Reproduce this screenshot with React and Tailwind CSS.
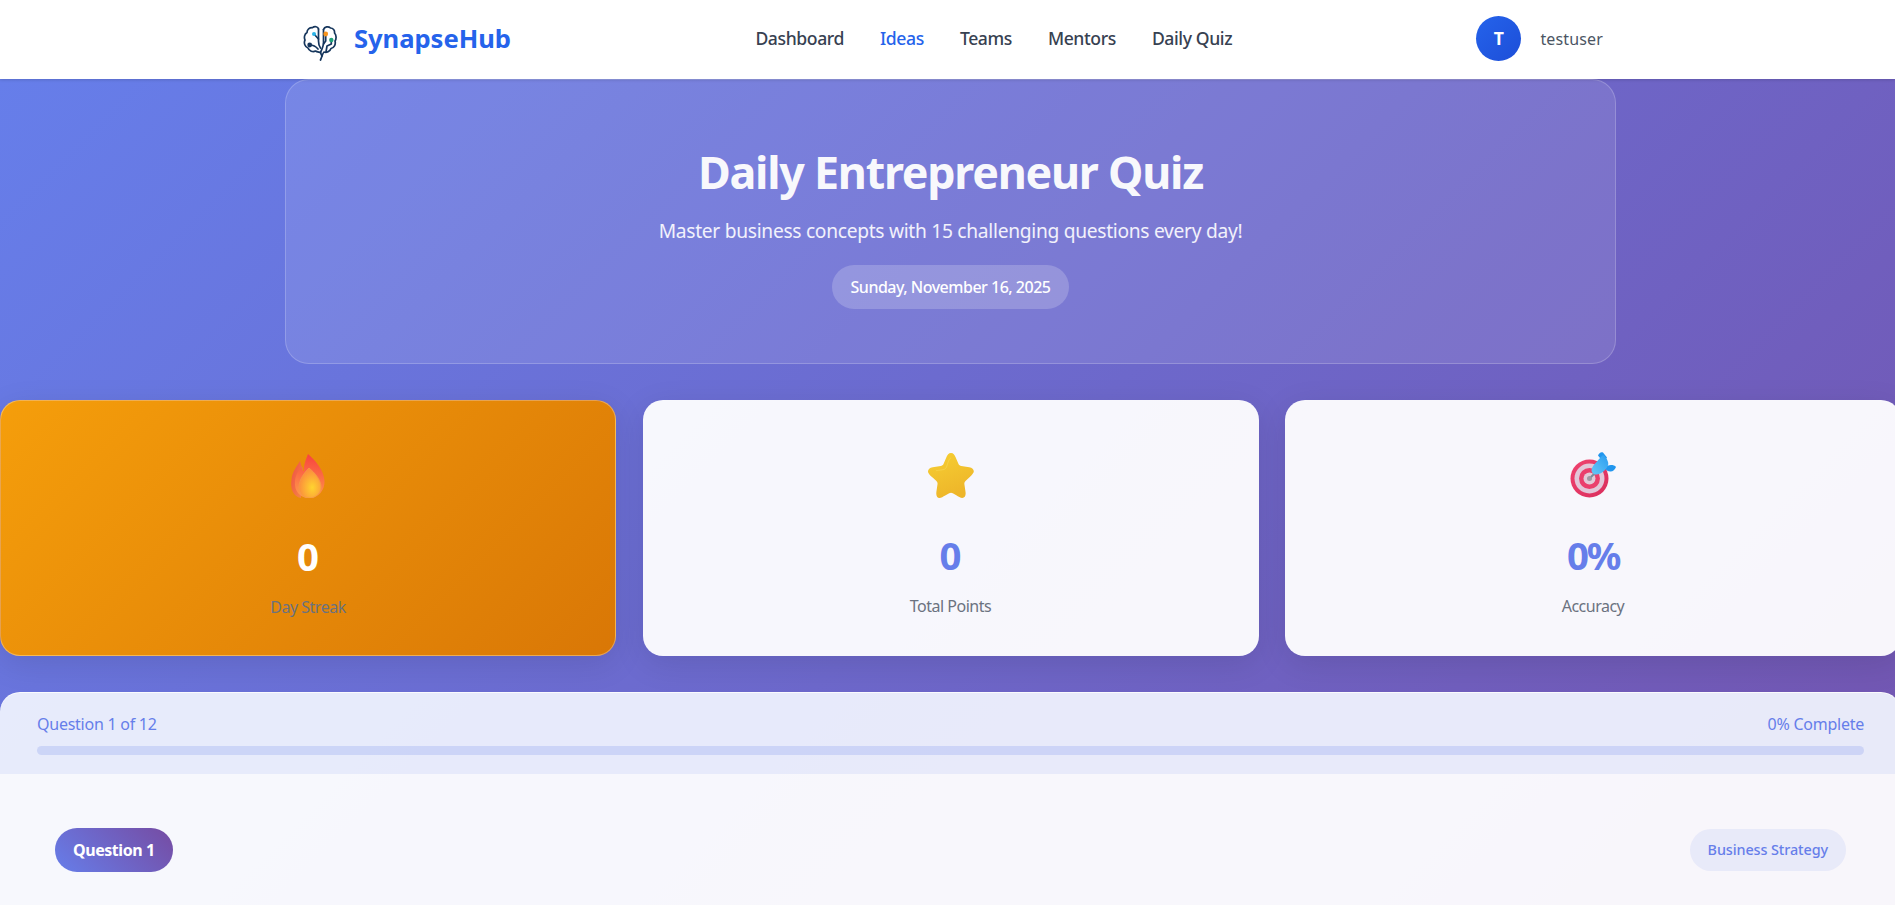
import React from "react";

function Brain() {
  return (
    <svg width="36" height="42" viewBox="0 0 36 42" fill="none" stroke="#16365c" strokeWidth="1.7" strokeLinecap="round" strokeLinejoin="round" className="shrink-0">
      <path d="M15.500 10C15 7.500 11.500 7 9.500 8.700 6.500 8.500 4 10.500 4 13.500 1.500 15 .8 18.500 2 21 .5 24 2 28 5 29c1 3 5 4.500 7.500 3 1.500 1 3.500 1 5 1.500" />
      <path d="M15.500 10v12c0 3 .5 5 2 7" />
      <path d="M20.500 10.500c1-3 5-3.500 7-1.500 2.500 0 4.500 2.500 4 5 2 2 2 6 .5 8 1 3.500-1 7-4 7.500-1 3-4.500 4.500-7 3.500-1 1-1.500 2.500-2 4-.5 1.500-1 3-1.500 4" />
      <path d="M20.500 10.500V24c0 3-1.500 6-3 9.500.5 1.500 1 2.500 1.500 3.500" />
      <path d="M11 15l4.500 5M6.700 26c3.300 0 6.300 1.500 8.300 4M22.700 15v7l-2.200 3M28.300 21v4L24 27l-1 6" />
      <circle cx="11" cy="15" r="2" fill="#2bb3e6" stroke="none" />
      <circle cx="22.700" cy="15" r="2.400" fill="#f7941d" stroke="none" />
      <circle cx="28.300" cy="21" r="2.200" fill="#1fa37a" stroke="none" />
      <circle cx="6.700" cy="26" r="2.400" fill="#16365c" stroke="none" />
    </svg>
  );
}

function Flame() {
  return (
    <svg width="34" height="44" viewBox="0 0 34 44">
      <defs>
        <linearGradient id="fl1" x1="0.6" y1="0" x2="0.5" y2="1">
          <stop offset="0" stopColor="#f8413f" />
          <stop offset="1" stopColor="#ff9a4a" />
        </linearGradient>
        <linearGradient id="fl0" x1="0" y1="0" x2="1" y2="1">
          <stop offset="0" stopColor="#f04e45" />
          <stop offset="1" stopColor="#f58a45" />
        </linearGradient>
        <radialGradient id="fl2" cx="0.6" cy="0.65" r="0.6">
          <stop offset="0" stopColor="#ffd42f" />
          <stop offset="1" stopColor="#fb8f3c" />
        </radialGradient>
      </defs>
      <path d="M9 7c1 3 1 5 3 7l-2 30C3 43-1 36 .5 26 1 18 6 12 9 7z" fill="url(#fl0)" />
      <path d="M17 0c7 6 16 16 16.500 27 .5 9-6 17-15.500 17C9 44 3 37 4 27c.8-7 4-11 6-13 1 2 2 3 3 3-.5-6 2-12 4-17z" fill="url(#fl1)" />
      <path d="M18 14c6 5 12 12 12 19 0 6-5 11-11.500 11C12 44 8 39 8 33c0-7 5-14 10-19z" fill="url(#fl2)" stroke="#f59a47" strokeWidth="0.8" />
    </svg>
  );
}

function Star() {
  return (
    <svg width="46" height="45" viewBox="0 0 46 45">
      <defs>
        <linearGradient id="st" x1="0" y1="0" x2="0.4" y2="1">
          <stop offset="0" stopColor="#f6cf33" />
          <stop offset="1" stopColor="#eeb62a" />
        </linearGradient>
      </defs>
      <path d="M23 0c2.500 0 3.500 2 4.500 4l3 7c.5 1.200 1.500 1.800 2.800 2l8 1.200c3.500.5 5.200 3 4.200 5.300-.8 1.800-2.800 3.500-4.500 5.200l-3.500 3.300c-1 1-1.300 2-1.100 3.300l1.100 7.500c.6 3.800-.6 6.200-3.200 6.200-1.800 0-4-1.500-6-2.700l-3.500-2c-1.300-.7-2.300-.7-3.600 0l-4 2.200c-2 1.100-4 2.500-5.800 2.500-2.500 0-3.500-2.500-3-6.200l1.100-7.500c.2-1.300-.1-2.300-1.100-3.300l-3.500-3.300C2.800 23 .8 21.300.2 19.500c-.8-2.300 1-4.800 4.500-5.300l8-1.200c1.300-.2 2.300-.8 2.800-2l3-7c1-2 2-4 4.500-4z" fill="url(#st)" />
      <path d="M23 5c-1 0-1.800 1.500-2.500 3l-2 6c-.6 1.500-2 2.500-3.500 2.700l-7 1" fill="none" stroke="#fbe066" strokeWidth="1" opacity="0.4" />
    </svg>
  );
}

function Target() {
  return (
    <svg width="46" height="46" viewBox="0 0 46 46">
      <defs>
        <linearGradient id="ta" x1="0" y1="0" x2="1" y2="1">
          <stop offset="0" stopColor="#f0436f" />
          <stop offset="1" stopColor="#d92d5c" />
        </linearGradient>
        <linearGradient id="ar" x1="0" y1="1" x2="1" y2="0">
          <stop offset="0" stopColor="#67c8f7" />
          <stop offset="1" stopColor="#2a9cf0" />
        </linearGradient>
      </defs>
      <circle cx="19.500" cy="26.500" r="19" fill="url(#ta)" />
      <circle cx="19.500" cy="26.500" r="15" fill="#e2c6d8" />
      <circle cx="19.500" cy="26.500" r="10.500" fill="#ea3f6d" />
      <circle cx="19.500" cy="26.500" r="6" fill="#e2cbd9" />
      <circle cx="19.500" cy="26.500" r="2.500" fill="#a09aa4" />
      <path d="M21 25l6-6" stroke="#7c8c9e" strokeWidth="2" />
      <path d="M28 3.500C29 1 31 -.5 33 .5l4 5c-1 2-3 3-5 3z M34 15c2-1 5-2 7-2 2 0 4 .5 5 2-1 2.500-3 4.500-5.500 4.500-2.500 0-5-1.500-6.500-4.500z" fill="#2196ee" />
      <path d="M33 3c2 1 4 3.500 5 7 1 3-1 6-3.500 8.500-3 3-7 4.500-9 4-2.500-.5-4-2-4-4.500.5-3 2.500-5.500 5-8 2-2 4-5 6.500-7z" fill="url(#ar)" />
    </svg>
  );
}

function Stat({ icon, value, label, streak, valueClass }) {
  return (
    <div
      className={
        streak
          ? "h-[256px] rounded-[20px] border border-white/30 bg-[linear-gradient(135deg,#f59e0b,#d97706)] flex flex-col items-center shadow-[0_8px_32px_rgba(0,0,0,0.1)]"
          : "h-[256px] rounded-[20px] bg-white/95 flex flex-col items-center shadow-[0_8px_32px_rgba(0,0,0,0.1)]"
      }
    >
      <div className="mt-[52px] h-[46px] flex items-center justify-center">{icon}</div>
      <div className={valueClass}>{value}</div>
      <div className="mt-[14px] text-[16px] leading-[22px] text-[#6b7280] tracking-[-0.5px]">{label}</div>
    </div>
  );
}

export default function App() {
  return (
    <div className="h-screen w-full overflow-hidden bg-white font-['Noto_Sans',sans-serif]">
      <nav className="h-[79px] bg-white shadow-[0_1px_3px_rgba(0,0,0,0.15)] relative z-10 flex items-center pl-[303px] pr-[292px]">
        <Brain />
        <span className="ml-[15px] text-[25.600px] font-bold text-[#2563eb] tracking-[-0.05px]">SynapseHub</span>
        <div className="ml-[244.500px] mb-[2px] flex items-center gap-[36px] text-[17.600px] font-medium text-[#374151] tracking-[-0.4px]">
          <span>Dashboard</span>
          <span className="text-[#2563eb]">Ideas</span>
          <span>Teams</span>
          <span>Mentors</span>
          <span>Daily Quiz</span>
        </div>
        <div className="ml-auto mb-[2px] flex items-center">
          <div className="w-[45px] h-[45px] rounded-full bg-gradient-to-br from-[#2563eb] to-[#1d4ed8] text-white font-bold text-[17.600px] flex items-center justify-center">T</div>
          <span className="ml-[19px] text-[16px] text-[#4b5563] tracking-[0.15px]">testuser</span>
        </div>
      </nav>
      <main className="w-[1901px] h-[1400px] bg-[linear-gradient(135deg,#667eea,#764ba2)]">
        <section className="mx-auto w-[1331px] h-[285px] rounded-[24px] border border-white/20 bg-white/10 flex flex-col items-center">
          <h1 className="mt-[62px] text-[44.800px] leading-[60px] font-bold text-[#f8f8fc] tracking-[-1.26px]">Daily Entrepreneur Quiz</h1>
          <p className="mt-[16px] text-[19.200px] leading-[26px] text-white/90 tracking-[-0.29px]">Master business concepts with 15 challenging questions every day!</p>
          <div className="mt-[21px] h-[44px] px-[19px] rounded-full bg-white/20 flex items-center text-[16px] font-medium text-white tracking-[-0.5px]">Sunday, November 16, 2025</div>
        </section>
        <section className="mt-[36px] grid grid-cols-3 gap-[26.500px]">
          <Stat streak icon={<Flame />} value="0" label="Day Streak" valueClass="mt-[31px] text-[38.400px] leading-[52px] font-bold text-white" />
          <Stat icon={<Star />} value="0" label="Total Points" valueClass="mt-[31px] text-[38.400px] leading-[52px] font-bold text-[#667eea]" />
          <Stat icon={<Target />} value="0%" label="Accuracy" valueClass="mt-[31px] text-[38.400px] leading-[52px] font-bold text-[#667eea] tracking-[-2.400px]" />
        </section>
        <section className="mt-[36px] rounded-[20px] bg-white/95 h-[600px] border-t border-white/40">
          <div className="h-[81px] bg-[#667eea]/10 rounded-t-[20px] px-[37px] pt-[20px]">
            <div className="flex justify-between text-[16px] leading-[22px] text-[#667eea] tracking-[-0.25px]">
              <span>Question 1 of 12</span>
              <span>0% Complete</span>
            </div>
            <div className="mt-[11px] h-[9px] rounded-full bg-[#667eea]/20" />
          </div>
          <div className="px-[55px] pt-[54px] flex justify-between items-center">
            <span className="h-[44px] px-[18px] rounded-full bg-[linear-gradient(45deg,#667eea,#764ba2)] text-white font-bold text-[16px] flex items-center tracking-[-0.45px]">Question 1</span>
            <span className="h-[42px] px-[18px] rounded-full bg-[#667eea]/10 text-[#667eea] font-medium text-[14.400px] flex items-center tracking-[-0.1px]">Business Strategy</span>
          </div>
        </section>
      </main>
    </div>
  );
}
